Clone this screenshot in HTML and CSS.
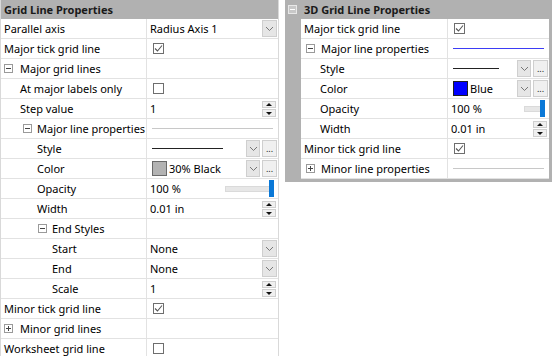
FILE: index.html
```html
<!DOCTYPE html>
<html>
<head>
<meta charset="utf-8">
<link rel="stylesheet" href="styles.css">
</head>
<body>
<div class="page">
  <section class="grid left">
    <div class="hdr">Grid Line Properties</div>

    <div class="row"><div class="lab l0">Parallel axis</div><div class="val">Radius Axis 1<span class="fill"></span><span class="btn dd"><svg width="9" height="6" viewBox="0 0 9 6"><polyline points="1,1 4.5,4.5 8,1" fill="none" stroke="#777" stroke-width="1"/></svg></span></div></div>

    <div class="row"><div class="lab l0">Major tick grid line</div><div class="val"><span class="cb"><svg width="11" height="11" viewBox="0 0 11 11"><polyline points="2,5.5 4.5,8 9,2.5" fill="none" stroke="#555" stroke-width="1.1"/></svg></span></div></div>

    <div class="row"><div class="lab e1"><span class="exp minus"></span>Major grid lines</div><div class="val"></div></div>

    <div class="row"><div class="lab l1">At major labels only</div><div class="val"><span class="cb"></span></div></div>

    <div class="row"><div class="lab l1">Step value</div><div class="val">1<span class="fill"></span><span class="spin"><span class="up"></span><span class="dn"></span></span></div></div>

    <div class="row"><div class="lab e2"><span class="exp minus"></span>Major line properties</div><div class="val"><span class="prev gray"></span></div></div>

    <div class="row"><div class="lab l2">Style</div><div class="val"><span class="sline"></span><span class="fill"></span><span class="btn dd sm"><svg width="9" height="6" viewBox="0 0 9 6"><polyline points="1,1 4.5,4.5 8,1" fill="none" stroke="#777" stroke-width="1"/></svg></span><span class="btn dots">...</span></div></div>

    <div class="row"><div class="lab l2">Color</div><div class="val"><span class="sw gray30"></span>30% Black<span class="fill"></span><span class="btn dd sm"><svg width="9" height="6" viewBox="0 0 9 6"><polyline points="1,1 4.5,4.5 8,1" fill="none" stroke="#777" stroke-width="1"/></svg></span><span class="btn dots">...</span></div></div>

    <div class="row"><div class="lab l2">Opacity</div><div class="val">100 %<span class="fill"></span><span class="slider"><span class="thumb"></span></span></div></div>

    <div class="row"><div class="lab l2">Width</div><div class="val">0.01 in<span class="fill"></span><span class="spin"><span class="up"></span><span class="dn"></span></span></div></div>

    <div class="row"><div class="lab e3"><span class="exp minus"></span>End Styles</div><div class="val"></div></div>

    <div class="row"><div class="lab l3">Start</div><div class="val">None<span class="fill"></span><span class="btn dd"><svg width="9" height="6" viewBox="0 0 9 6"><polyline points="1,1 4.5,4.5 8,1" fill="none" stroke="#777" stroke-width="1"/></svg></span></div></div>

    <div class="row"><div class="lab l3">End</div><div class="val">None<span class="fill"></span><span class="btn dd"><svg width="9" height="6" viewBox="0 0 9 6"><polyline points="1,1 4.5,4.5 8,1" fill="none" stroke="#777" stroke-width="1"/></svg></span></div></div>

    <div class="row"><div class="lab l3">Scale</div><div class="val">1<span class="fill"></span><span class="spin"><span class="up"></span><span class="dn"></span></span></div></div>

    <div class="row"><div class="lab l0">Minor tick grid line</div><div class="val"><span class="cb"><svg width="11" height="11" viewBox="0 0 11 11"><polyline points="2,5.5 4.5,8 9,2.5" fill="none" stroke="#555" stroke-width="1.1"/></svg></span></div></div>

    <div class="row"><div class="lab e1"><span class="exp plus"></span>Minor grid lines</div><div class="val"></div></div>

    <div class="row"><div class="lab l0">Worksheet grid line</div><div class="val"><span class="cb"></span></div></div>
  </section>

  <section class="grid right">
    <div class="hdr rh"><span class="exp minus hexp"></span>3D Grid Line Properties</div>
    <div class="body">
      <div class="row"><div class="lab r0">Major tick grid line</div><div class="val"><span class="cb"><svg width="11" height="11" viewBox="0 0 11 11"><polyline points="2,5.5 4.5,8 9,2.5" fill="none" stroke="#555" stroke-width="1.1"/></svg></span></div></div>

      <div class="row"><div class="lab re1"><span class="exp minus"></span>Major line properties</div><div class="val"><span class="prev blue"></span></div></div>

      <div class="row"><div class="lab r1">Style</div><div class="val"><span class="sline short"></span><span class="fill"></span><span class="btn dd sm"><svg width="9" height="6" viewBox="0 0 9 6"><polyline points="1,1 4.5,4.5 8,1" fill="none" stroke="#777" stroke-width="1"/></svg></span><span class="btn dots">...</span></div></div>

      <div class="row"><div class="lab r1">Color</div><div class="val"><span class="sw blue"></span>Blue<span class="fill"></span><span class="btn dd sm"><svg width="9" height="6" viewBox="0 0 9 6"><polyline points="1,1 4.5,4.5 8,1" fill="none" stroke="#777" stroke-width="1"/></svg></span><span class="btn dots">...</span></div></div>

      <div class="row"><div class="lab r1">Opacity</div><div class="val">100 %<span class="fill"></span><span class="slider short"><span class="thumb"></span></span></div></div>

      <div class="row"><div class="lab r1">Width</div><div class="val">0.01 in<span class="fill"></span><span class="spin"><span class="up"></span><span class="dn"></span></span></div></div>

      <div class="row"><div class="lab r0">Minor tick grid line</div><div class="val"><span class="cb"><svg width="11" height="11" viewBox="0 0 11 11"><polyline points="2,5.5 4.5,8 9,2.5" fill="none" stroke="#555" stroke-width="1.1"/></svg></span></div></div>

      <div class="row"><div class="lab re1"><span class="exp plus"></span>Minor line properties</div><div class="val"><span class="prev gray"></span></div></div>
    </div>
  </section>
</div>
</body>
</html>
```
FILE: styles.css
```css
* { box-sizing: border-box; }
html, body { margin: 0; padding: 0; background: #fff; }
body {
  font-family: "Noto Sans", "Open Sans", sans-serif;
  font-size: 11px;
  color: #000;
  width: 552px;
  height: 356px;
  overflow: hidden;
}
.page {
  display: flex;
  align-items: flex-start;
  gap: 6px;
}
.grid.left {
  width: 279px;
  border-left: 1px solid #d9d9d9;
  border-right: 1px solid #d9d9d9;
  flex: none;
}
.hdr {
  height: 19px;
  background: #b1b1b1;
  font-weight: bold;
  color: #1a1a1a;
  display: flex;
  align-items: center;
  padding-left: 3px;
}
.row {
  height: 20px;
  display: grid;
  grid-template-columns: 146px 1fr;
  border-bottom: 1px solid #e2e2e2;
}
.lab {
  display: flex;
  align-items: center;
  border-right: 1px solid #e2e2e2;
  white-space: nowrap;
  overflow: hidden;
}
.val {
  display: flex;
  align-items: center;
  padding-left: 3px;
  padding-right: 1px;
  white-space: nowrap;
  min-width: 0;
}
.fill { flex: 1; }

.l0 { padding-left: 3px; }
.l1 { padding-left: 19px; }
.l2 { padding-left: 36px; }
.l3 { padding-left: 51px; }
.e1 { padding-left: 3px; }
.e1 .exp { margin-right: 7px; }
.e2 { padding-left: 22px; }
.e2 .exp { margin-right: 5px; }
.e3 { padding-left: 37px; }
.e3 .exp { margin-right: 5px; }

.exp {
  width: 9px;
  height: 9px;
  border: 1px solid #9a9a9a;
  background: #fff;
  position: relative;
  flex: none;
}
.exp::before {
  content: "";
  position: absolute;
  left: 1px;
  top: 3px;
  width: 5px;
  height: 1px;
  background: #444;
}
.exp.plus::after {
  content: "";
  position: absolute;
  left: 3px;
  top: 1px;
  width: 1px;
  height: 5px;
  background: #444;
}

.btn {
  width: 15px;
  height: 17px;
  background: #e6e6e6;
  border: 1px solid #cfcfcf;
  display: flex;
  align-items: center;
  justify-content: center;
  flex: none;
}
.btn.sm { width: 14px; margin-right: 2px; }
.btn.dots {
  width: 15px;
  font-size: 9px;
  line-height: 1;
  color: #222;
  align-items: flex-end;
  padding-bottom: 3px;
  background: #f0f0f0;
}
.cb {
  width: 11px;
  height: 11px;
  border: 1px solid #6e6e6e;
  margin-left: 3px;
  display: flex;
  align-items: center;
  justify-content: center;
  background: #fff;
}
.cb svg { display: block; margin: -1px; }

.spin {
  width: 14px;
  height: 16px;
  display: flex;
  flex-direction: column;
  gap: 1px;
  flex: none;
  margin-right: 1px;
}
.spin span {
  flex: 1;
  background: #f0f0f0;
  border: 1px solid #cfcfcf;
  position: relative;
}
.spin .up::after, .spin .dn::after {
  content: "";
  position: absolute;
  left: 3px;
  border-left: 3px solid transparent;
  border-right: 3px solid transparent;
}
.spin .up::after { top: 1px; border-bottom: 3px solid #111; }
.spin .dn::after { top: 2px; border-top: 3px solid #111; }

.prev {
  height: 1px;
  flex: 1;
  margin: 0 4px 0 2px;
}
.prev.gray { background: #c8c8c8; }
.prev.blue { background: #3d3df5; }

.sline {
  width: 71px;
  height: 1px;
  background: #222;
  margin-left: 2px;
  flex: none;
}
.sline.short { width: 46px; }

.sw {
  width: 15px;
  height: 15px;
  border: 1px solid #555;
  margin-left: 2px;
  margin-right: 2px;
  flex: none;
}
.sw.gray30 { background: #b3b3b3; border-color: #6a6a6a; }
.sw.blue { background: #0000ff; border-color: #202020; }

.slider {
  width: 49px;
  height: 17px;
  position: relative;
  flex: none;
  margin-right: 3px;
}
.slider::before {
  content: "";
  position: absolute;
  left: 0;
  right: 3px;
  top: 6px;
  height: 4px;
  background: #e7e7e7;
  border: 1px solid #dadada;
}
.slider.short { width: 21px; }
.thumb {
  position: absolute;
  right: 0;
  top: 0;
  width: 5px;
  height: 17px;
  background: #0a78d7;
}

.grid.right {
  width: 267px;
  background: #b1b1b1;
  padding: 0 3px 3px 16px;
  flex: none;
}
.rh {
  padding-left: 3px;
  position: relative;
}
.hexp {
  position: absolute;
  left: -13px;
  top: 5px;
  border-color: #e8e8e8;
  background: #c8c8c8;
}
.hexp::before { background: #fff; }
.grid.right .body { background: #fff; }
.grid.right .row { grid-template-columns: 147px 1fr; }
.r0 { padding-left: 3px; }
.r1 { padding-left: 19px; }
.re1 { padding-left: 5px; }
.re1 .exp { margin-right: 6px; }
```
